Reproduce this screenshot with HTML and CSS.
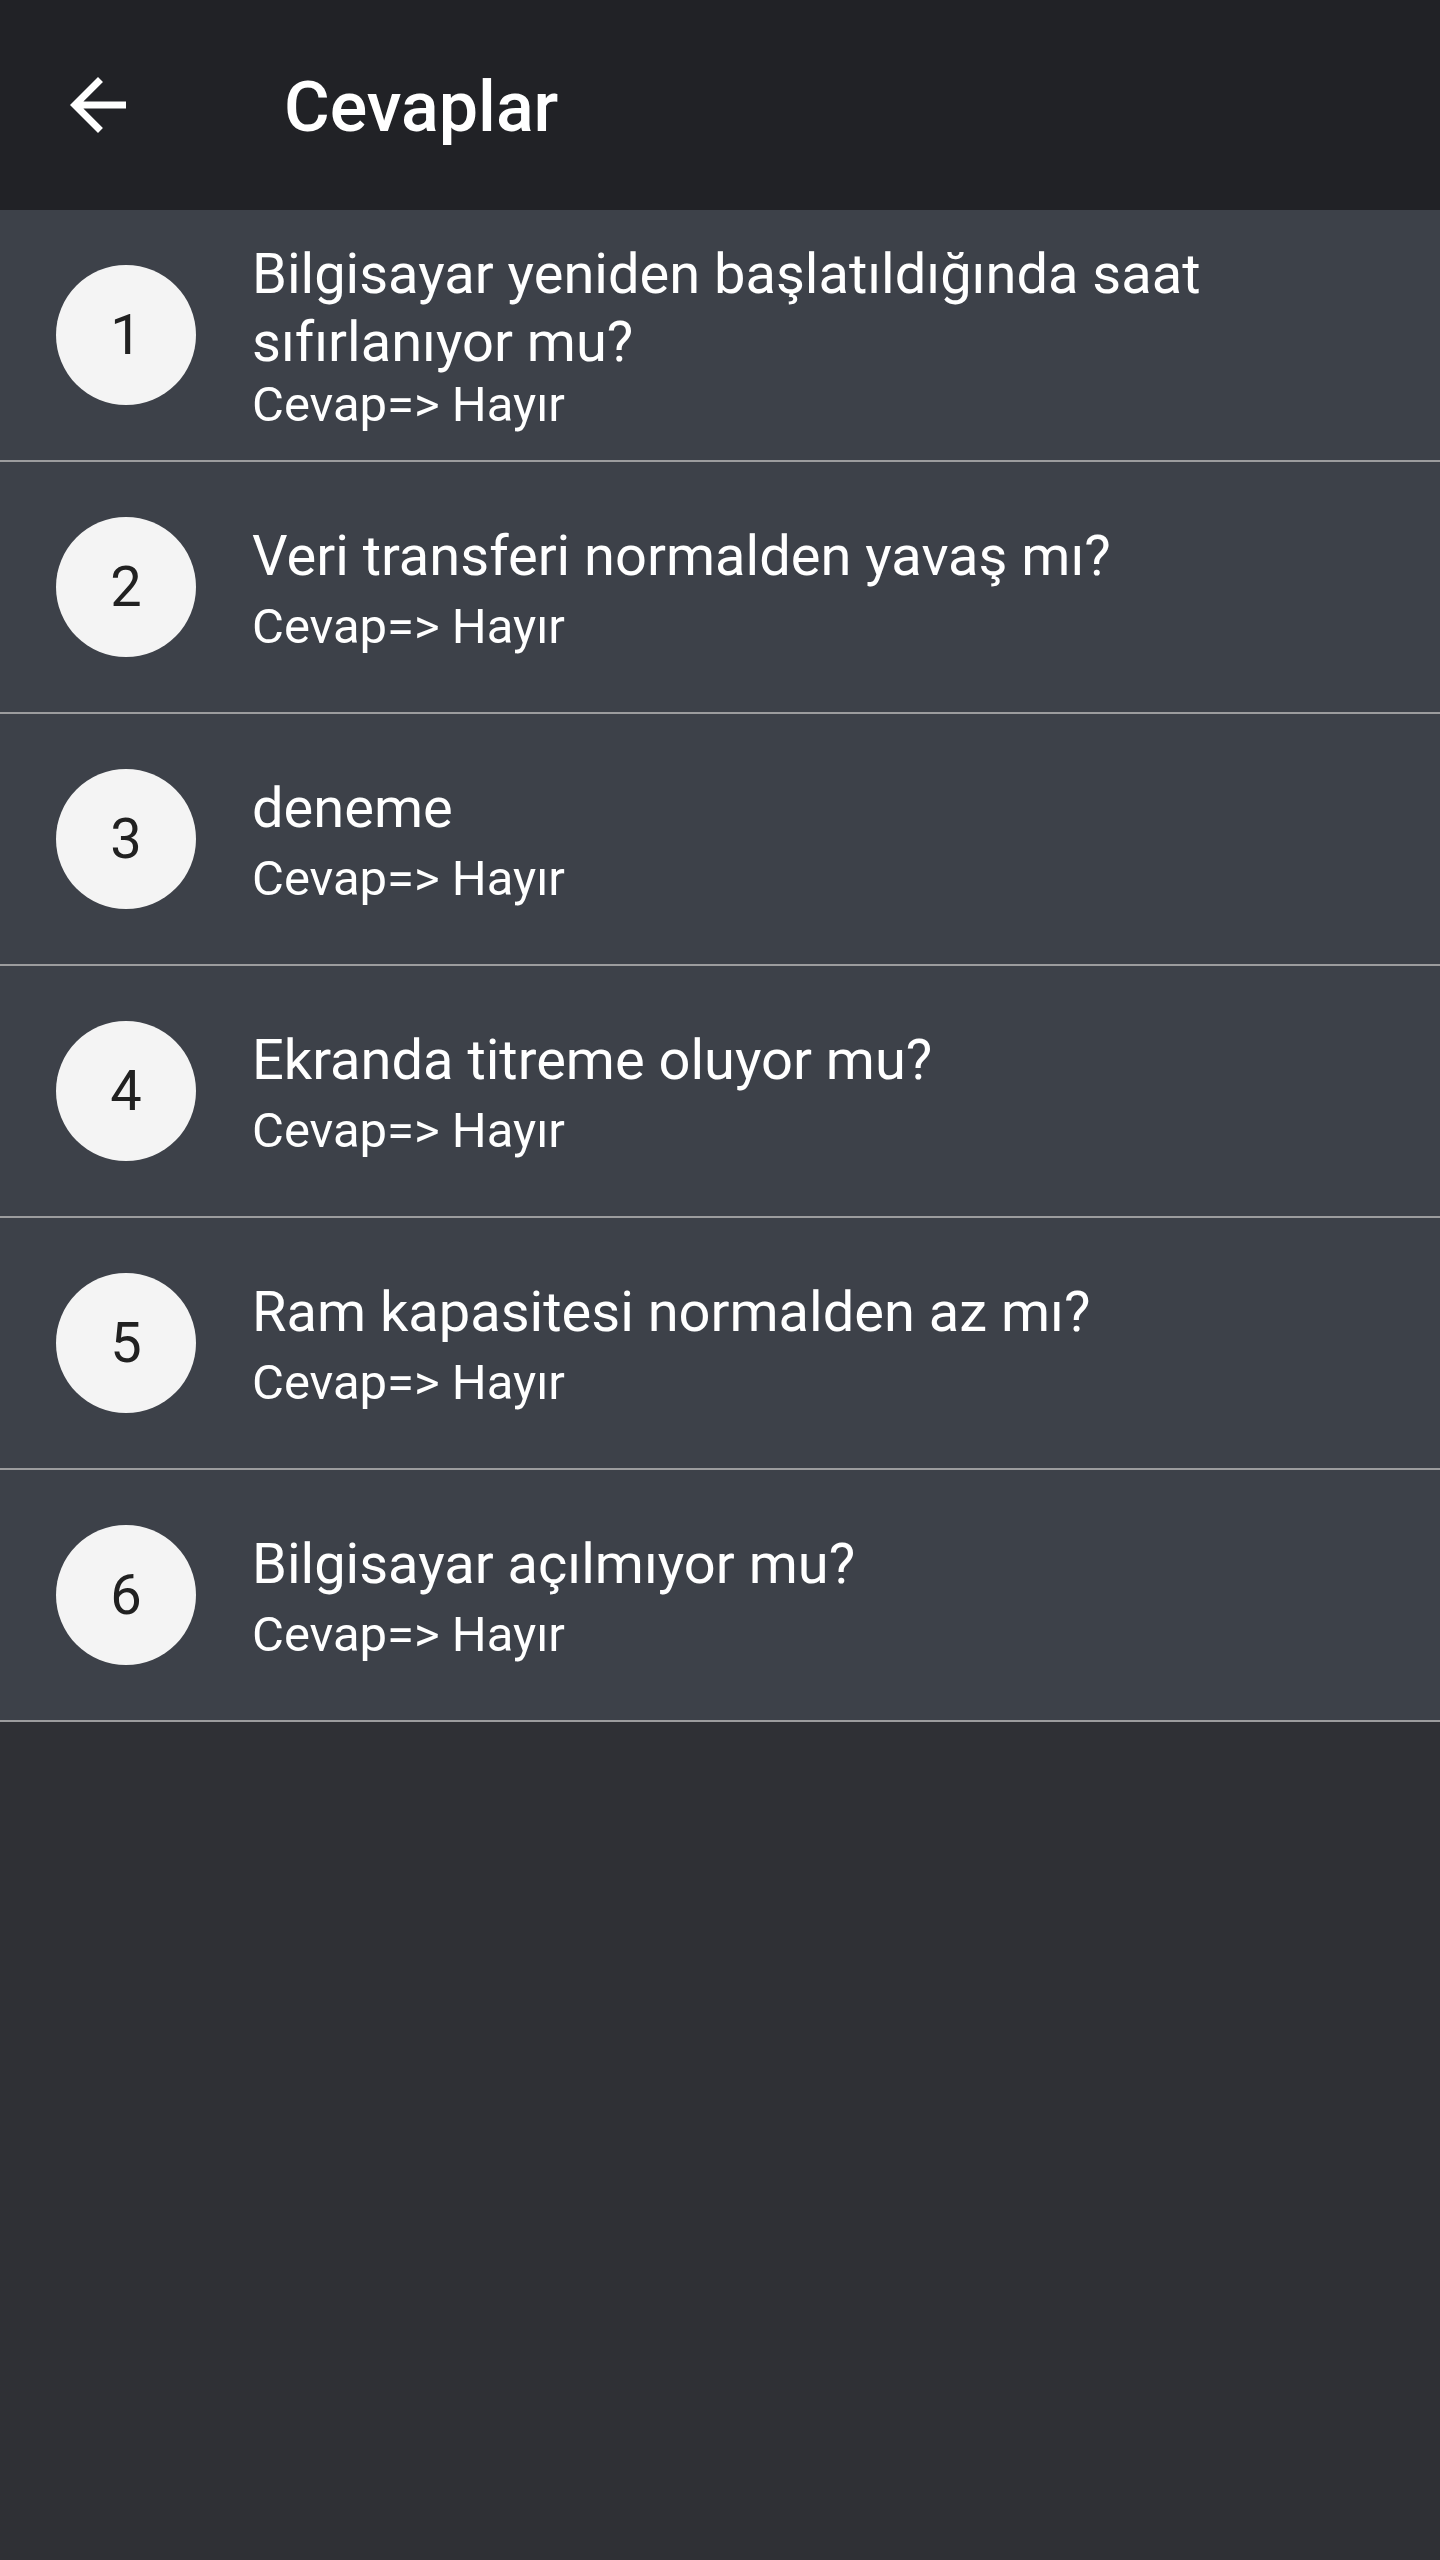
FILE: index.html
```html
<!DOCTYPE html>
<html lang="tr">
<head>
<meta charset="utf-8">
<title>Cevaplar</title>
<link rel="stylesheet" href="styles.css">
</head>
<body>
<div class="screen">
  <header class="toolbar">
    <button class="back" aria-label="Geri">
      <svg viewBox="0 0 24 24" width="84" height="84"><path fill="#ffffff" d="M20 11H7.83l5.59-5.59L12 4l-8 8 8 8 1.41-1.41L7.83 13H20v-2z"/></svg>
    </button>
    <h1 class="title">Cevaplar</h1>
  </header>
  <ul class="list">
    <li class="row row--wrap">
      <div class="badge">1</div>
      <div class="text">
        <div class="question">Bilgisayar yeniden başlatıldığında saat sıfırlanıyor mu?</div>
        <div class="answer">Cevap=&gt; Hayır</div>
      </div>
    </li>
    <li class="row">
      <div class="badge">2</div>
      <div class="text">
        <div class="question">Veri transferi normalden yavaş mı?</div>
        <div class="answer">Cevap=&gt; Hayır</div>
      </div>
    </li>
    <li class="row">
      <div class="badge">3</div>
      <div class="text">
        <div class="question">deneme</div>
        <div class="answer">Cevap=&gt; Hayır</div>
      </div>
    </li>
    <li class="row">
      <div class="badge">4</div>
      <div class="text">
        <div class="question">Ekranda titreme oluyor mu?</div>
        <div class="answer">Cevap=&gt; Hayır</div>
      </div>
    </li>
    <li class="row">
      <div class="badge">5</div>
      <div class="text">
        <div class="question">Ram kapasitesi normalden az mı?</div>
        <div class="answer">Cevap=&gt; Hayır</div>
      </div>
    </li>
    <li class="row">
      <div class="badge">6</div>
      <div class="text">
        <div class="question">Bilgisayar açılmıyor mu?</div>
        <div class="answer">Cevap=&gt; Hayır</div>
      </div>
    </li>
  </ul>
</div>
</body>
</html>
```

FILE: styles.css
```css
* { box-sizing: border-box; }
html, body {
  margin: 0;
  padding: 0;
  background: #2f3035;
}
body {
  font-family: Roboto, "Noto Sans", "Liberation Sans", sans-serif;
  color: #ffffff;
}
.screen {
  width: 1440px;
  min-height: 2560px;
  background: #2f3035;
}
.toolbar {
  height: 210px;
  background: #212226;
  display: flex;
  align-items: center;
  padding-left: 56px;
}
.back {
  width: 84px;
  height: 84px;
  padding: 0;
  margin: 0;
  border: 0;
  background: transparent;
  display: flex;
}
.back svg { display: block; }
.title {
  margin: 0 0 0 144px;
  font-size: 70px;
  font-weight: 500;
  line-height: 82px;
  color: #ffffff;
  position: relative;
  top: 2px;
}
.list {
  list-style: none;
  margin: 0;
  padding: 0;
}
.row {
  height: 252px;
  background: #3d4149;
  border-bottom: 2px solid #9c9c9e;
  display: flex;
  align-items: center;
  padding: 0 56px;
}
.badge {
  flex: 0 0 140px;
  width: 140px;
  height: 140px;
  border-radius: 50%;
  background: #f4f4f4;
  color: #212121;
  font-size: 56px;
  line-height: 140px;
  text-align: center;
}
.text {
  margin-left: 56px;
  display: flex;
  flex-direction: column;
  min-width: 0;
  flex: 1;
}
.question {
  font-size: 56px;
  line-height: 68px;
  color: #ffffff;
}
.answer {
  font-size: 49px;
  line-height: 50px;
  margin-top: 12px;
  color: #ffffff;
}
.row--wrap .answer { margin-top: 4px; }
```
